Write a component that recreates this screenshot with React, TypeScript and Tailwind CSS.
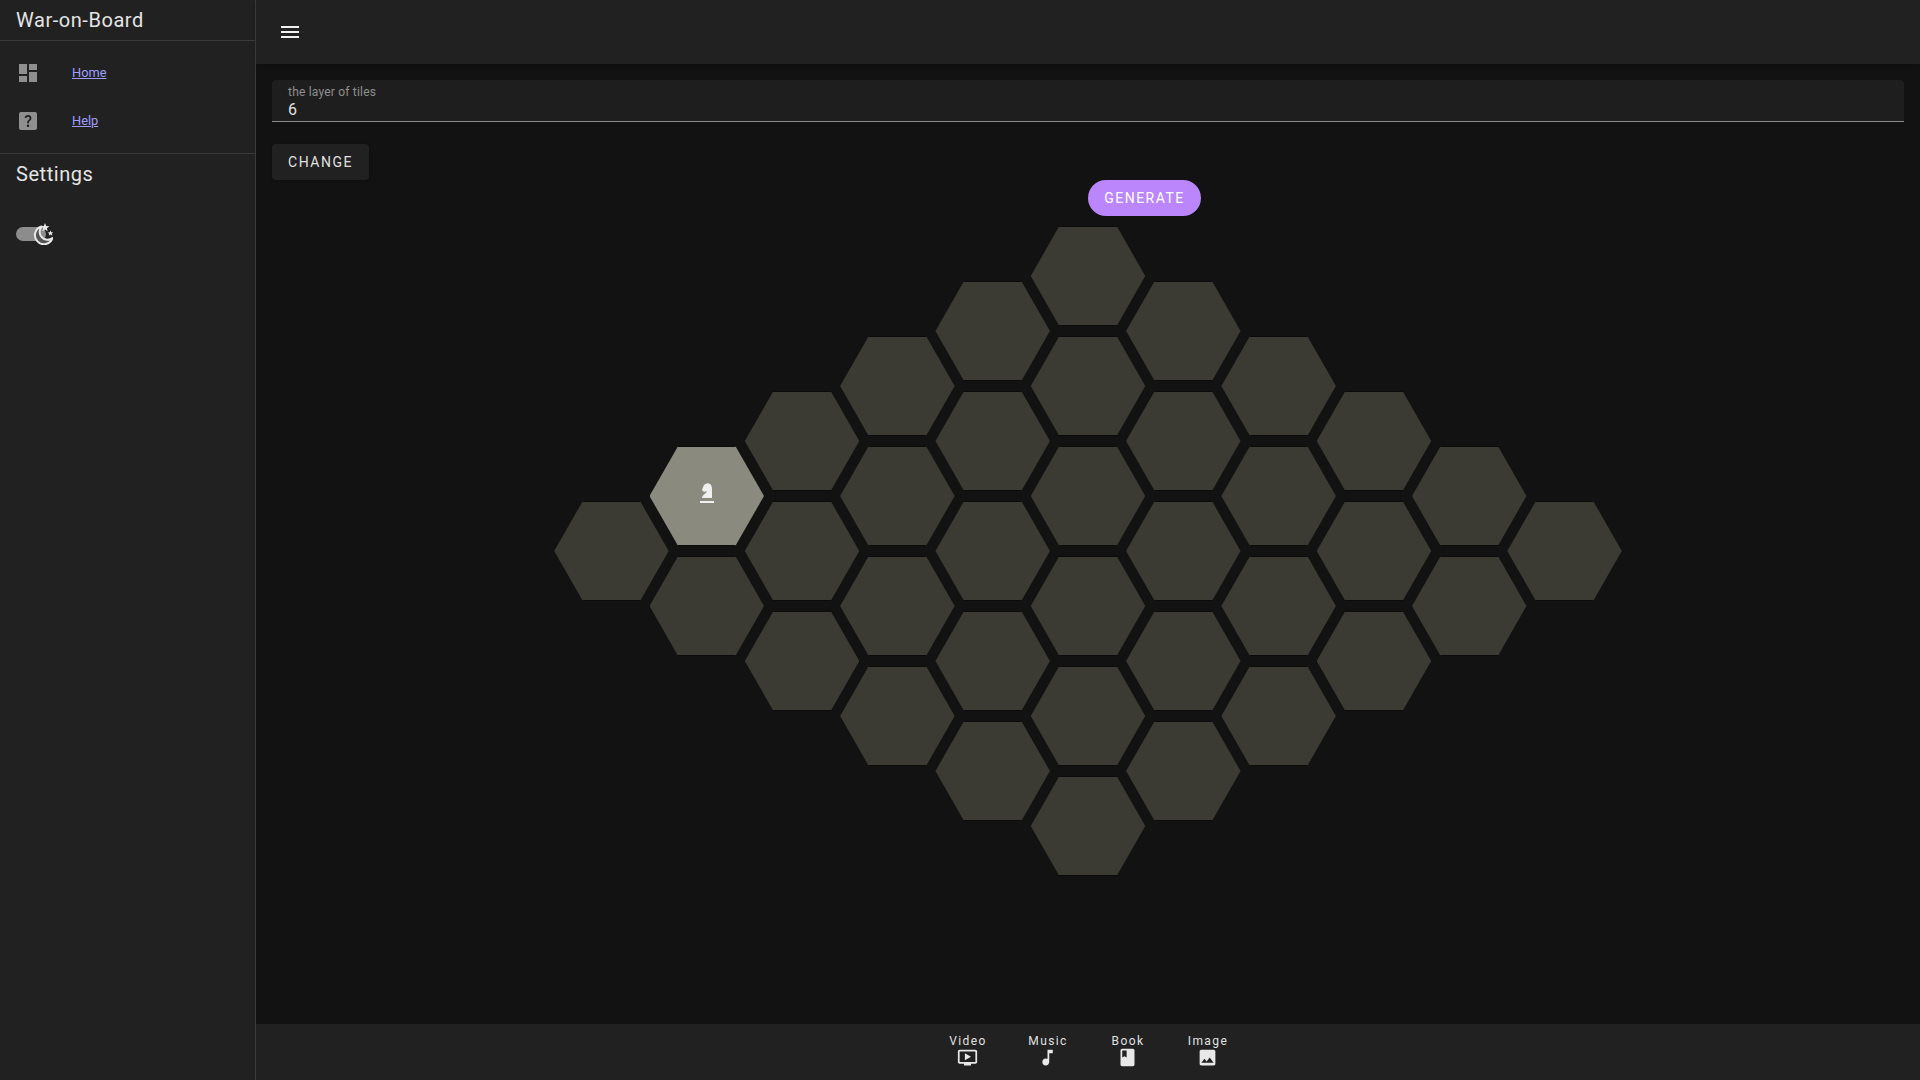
const menuPath = "M3 18h18v-2H3v2zm0-5h18v-2H3v2zm0-7v2h18V6H3z";
const dashboardPath = "M3 13h8V3H3v10zm0 8h8v-6H3v6zm10 0h8V11h-8v10zm0-18v6h8V3h-8z";
const helpPath =
  "M19 3H5c-1.1 0-2 .9-2 2v14c0 1.1.9 2 2 2h14c1.1 0 2-.9 2-2V5c0-1.1-.9-2-2-2zm-6.99 15c-.7 0-1.26-.56-1.26-1.26 0-.71.56-1.25 1.26-1.25.71 0 1.25.54 1.25 1.25-.01.69-.54 1.26-1.25 1.26zm3.01-7.4c-.76 1.11-1.48 1.46-1.87 2.17-.16.29-.22.48-.22 1.41h-1.82c0-.49-.08-1.29.31-1.98.49-.87 1.42-1.39 1.96-2.16.57-.81.25-2.33-1.37-2.33-1.06 0-1.58.8-1.8 1.48l-1.65-.7C9.01 7.15 10.22 6 11.99 6c1.48 0 2.49.67 3.01 1.52.44.72.7 2.07.02 3.08z";

const tabs = [
  {
    label: "Video",
    path: "M21 3H3c-1.11 0-2 .89-2 2v12c0 1.1.89 2 2 2h5v2h8v-2h5c1.1 0 1.99-.9 1.99-2L23 5c0-1.11-.9-2-2-2zm0 14H3V5h18v12zm-5-6l-7 4V7z",
  },
  {
    label: "Music",
    path: "M12 3v10.55c-.59-.34-1.27-.55-2-.55-2.21 0-4 1.79-4 4s1.79 4 4 4 4-1.79 4-4V7h4V3h-6z",
  },
  {
    label: "Book",
    path: "M18 2H6c-1.1 0-2 .9-2 2v16c0 1.1.9 2 2 2h12c1.1 0 2-.9 2-2V4c0-1.1-.9-2-2-2zM6 4h5v8l-2.5-1.5L6 12V4z",
  },
  {
    label: "Image",
    path: "M21 19V5c0-1.1-.9-2-2-2H5c-1.1 0-2 .9-2 2v14c0 1.1.9 2 2 2h14c1.1 0 2-.9 2-2zM8.5 13.5l2.5 3.01L14.5 12l4.5 6H5l3.5-4.5z",
  },
];

// tiles per column for a board with 6 layers
const columns = [1, 2, 3, 4, 5, 6, 5, 4, 3, 2, 1];

const Icon = ({path, className}: {path: string; className: string}) => (
  <svg viewBox="0 0 24 24" fill="currentColor" className={className}>
    <path d={path} />
  </svg>
);

const Knight = () => (
  <svg viewBox="0 0 14 20" fill="currentColor" className="mb-[6px] h-5 w-[14px] text-[#f0f0f0]">
    <path d="M2 15c0-3 4-4 5-7-1 0-2 1-3 1L2 7l1.5-4C5 .5 8-.5 10 1c1.5 1 2 3 2 5v9z" />
    <rect x="0" y="18" width="14" height="2" />
  </svg>
);

const Hex = ({active}: {active?: boolean}) => (
  <div
    className={`flex h-[100px] w-[114.5px] items-center justify-center border-y border-[#0b0b0b] [clip-path:polygon(25%_0,75%_0,100%_50%,75%_100%,25%_100%,0_50%)] ${
      active ? "bg-[#8a8a7e]" : "bg-[#3b3b33]"
    }`}
  >
    {active && <Knight />}
  </div>
);

const NavRow = ({path, label}: {path: string; label: string}) => (
  <div className="flex h-12 items-center pl-4">
    <Icon path={path} className="h-6 w-6 text-[#8f8f8f]" />
    <a href="#" className="ml-8 text-[12.8px] text-[#9e9eff] underline">
      {label}
    </a>
  </div>
);

export default function App() {
  return (
    <div className="flex h-screen w-full overflow-hidden bg-[#121212] font-[Roboto,sans-serif] text-white">
      <aside className="flex w-[256px] shrink-0 flex-col border-r border-[#3a3a3a] bg-[#212121]">
        <div className="flex h-[41px] items-center border-b border-[#3a3a3a] pl-4 text-xl tracking-[0.55px] text-[#e4e4e4]">
          War-on-Board
        </div>
        <nav className="flex flex-col border-b border-[#3a3a3a] py-2">
          <NavRow path={dashboardPath} label="Home" />
          <NavRow path={helpPath} label="Help" />
        </nav>
        <h2 className="pt-[4px] pl-4 text-xl leading-8 tracking-[0.55px] text-[#e4e4e4]">Settings</h2>
        <div className="mt-[37px] flex items-center pl-4">
          <div className="relative h-[14px] w-[30px] rounded-full bg-[#8c8c8c]">
            <svg viewBox="0 0 20 22" className="absolute -top-[4px] left-[17px] h-[22px] w-[20px] text-[#e8e8e8]">
              <path
                d="M8.5 3.5A9 9 0 1 0 19.5 15 8 8 0 0 1 8.5 3.5z"
                fill="#555555"
                stroke="currentColor"
                strokeWidth="2"
                strokeLinejoin="round"
              />
              <path d="M12 0l1.2 3 3.2.2-2.5 2 .8 3.1-2.7-1.7-2.7 1.7.8-3.1-2.5-2 3.2-.2z" fill="currentColor" />
              <path d="M17.5 7.5l.8 1.8 2 .1-1.5 1.3.5 2-1.8-1.1-1.8 1.1.5-2-1.5-1.3 2-.1z" fill="currentColor" />
            </svg>
          </div>
        </div>
      </aside>

      <div className="flex min-w-0 flex-1 flex-col">
        <header className="flex h-16 shrink-0 items-center bg-[#212121] pl-[22px] shadow-md">
          <Icon path={menuPath} className="h-6 w-6 text-[#f0f0f0]" />
        </header>

        <main className="min-h-0 flex-1 px-4 pt-4">
          <div className="h-[42px] rounded-t border-b border-[#8c8c8c] bg-[#1e1e1e] px-4 pt-[5px]">
            <div className="text-xs leading-[14px] tracking-[0.2px] text-[#8f8f8f]">the layer of tiles</div>
            <div className="pt-px text-base leading-[20px] text-[#e0e0e0]">6</div>
          </div>

          <button className="mt-[22px] block h-9 w-[97px] rounded bg-[#212121] text-sm tracking-[1.5px] text-[#e0e0e0] shadow">
            CHANGE
          </button>

          <button className="ml-[50%] block h-9 w-[113px] rounded-full bg-[#bb86fc] text-sm tracking-[1.5px] text-white">
            GENERATE
          </button>

          <div className="mt-[10px] flex items-center justify-center">
            {columns.map((count, c) => (
              <div key={c} className="flex flex-col gap-[10px] not-first:ml-[-19.2px]">
                {Array.from({length: count}).map((_, r) => (
                  <Hex key={r} active={c === 1 && r === 0} />
                ))}
              </div>
            ))}
          </div>
        </main>

        <footer className="flex h-14 shrink-0 justify-center bg-[#212121]">
          {tabs.map(tab => (
            <div key={tab.label} className="flex w-20 flex-col items-center pt-[10px]">
              <span className="text-xs leading-[14px] tracking-[1.4px] text-[#e0e0e0]">{tab.label}</span>
              <Icon path={tab.path} className="mr-[2px] -mt-px h-[21px] w-[21px] text-[#e8e8e8]" />
            </div>
          ))}
        </footer>
      </div>
    </div>
  );
}
